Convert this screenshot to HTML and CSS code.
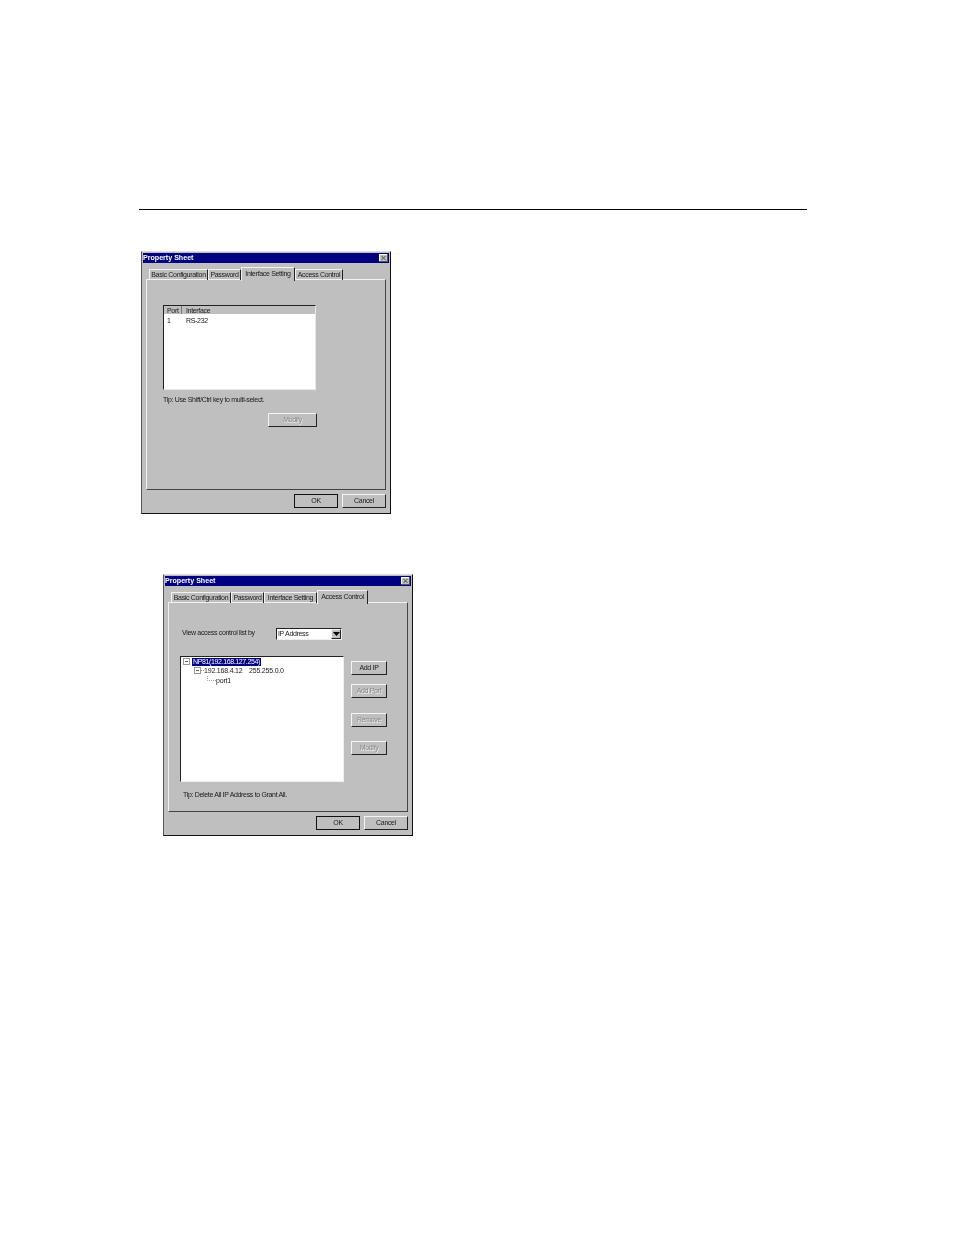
FILE: index.html
```html
<!DOCTYPE html>
<html lang="en">
<head>
<meta charset="utf-8">
<title>Property Sheet</title>
<link rel="stylesheet" href="styles.css">
</head>
<body>
<div class="rule"></div>

<section class="dialog first">
  <header class="title"><span>Property Sheet</span>
    <span class="close"><svg width="7" height="6" viewBox="0 0 7 6"><path d="M1.5 1L5.5 5M5.5 1L1.5 5" stroke="#333" stroke-width=".8" fill="none"/></svg></span>
  </header>
  <nav class="tabs">
    <span class="tab w-58">Basic Configuration</span>
    <span class="tab w-34">Password</span>
    <span class="tab active w-54">Interface Setting</span>
    <span class="tab w-47">Access Control</span>
  </nav>
  <div class="panel panel-one">
    <div class="list">
      <div class="list-head"><span class="col-port">Port</span><span class="col-iface">Interface</span></div>
      <div class="list-row"><span class="cell-port">1</span><span>RS-232</span></div>
    </div>
    <p class="tip tip-one">Tip: Use Shift/Ctrl key to multi-select.</p>
    <button class="btn btn-modify" disabled>Modify</button>
  </div>
  <footer class="foot"><button class="btn def">OK</button><button class="btn">Cancel</button></footer>
</section>

<section class="dialog second">
  <header class="title"><span>Property Sheet</span>
    <span class="close"><svg width="7" height="6" viewBox="0 0 7 6"><path d="M1.5 1L5.5 5M5.5 1L1.5 5" stroke="#333" stroke-width=".8" fill="none"/></svg></span>
  </header>
  <nav class="tabs">
    <span class="tab w-59">Basic Configuration</span>
    <span class="tab w-33">Password</span>
    <span class="tab w-53">Interface Setting</span>
    <span class="tab active w-50">Access Control</span>
  </nav>
  <div class="panel panel-two">
    <div class="view-row">
      <span class="view-label">View access control list by</span>
      <div class="combo"><span class="combo-text">IP Address</span>
        <span class="combo-btn"><svg width="7" height="4" viewBox="0 0 7 4"><path d="M0 0H7L3.5 4Z" fill="#000"/></svg></span>
      </div>
    </div>
    <div class="tree-row">
      <div class="tree">
        <div class="node">
          <svg class="exp" width="7" height="7" viewBox="0 0 7 7"><rect x=".5" y=".5" width="6" height="6" fill="#fff" stroke="#999"/><path d="M2 3.5H5" stroke="#555"/></svg>
          <span class="sel">NP81(192.168.127.254)</span>
        </div>
        <div class="node node-ip">
          <svg class="exp" width="10" height="7" viewBox="0 0 10 7"><rect x=".5" y=".5" width="6" height="6" fill="#fff" stroke="#999"/><path d="M2 3.5H5" stroke="#555"/><path d="M7 3.5H10" stroke="#999" stroke-dasharray="1 1"/></svg>
          <span class="ip">192.168.4.12</span><span>255.255.0.0</span>
        </div>
        <div class="node node-port">
          <svg width="9" height="8" viewBox="0 0 9 8"><path d="M.5 0V4.5H9" stroke="#999" stroke-dasharray="1 1" fill="none"/></svg>
          <span>port1</span>
        </div>
      </div>
      <div class="side">
        <button class="btn side-btn">Add IP</button>
        <button class="btn side-btn gap-9" disabled>Add Port</button>
        <button class="btn side-btn gap-15" disabled>Remove</button>
        <button class="btn side-btn gap-14" disabled>Modify</button>
      </div>
    </div>
    <p class="tip tip-two">Tip: Delete All IP Address to Grant All.</p>
  </div>
  <footer class="foot"><button class="btn def">OK</button><button class="btn">Cancel</button></footer>
</section>
</body>
</html>
```
FILE: styles.css
```css
html, body { margin: 0; padding: 0; background: #fff; }
body { height: 1235px; overflow: hidden; font: 7px/9px "Liberation Sans", Arial, sans-serif; letter-spacing: -0.33px; color: #1a1a1a; }

.rule { margin: 209px 0 0 139px; width: 668px; height: 1px; background: #000; }

.dialog {
  box-sizing: border-box; width: 250px; height: 263px; padding: 1px;
  background: #bfbfbf; border: 1px solid #111;
  border-top-color: #dcdcdc; border-left-color: #555;
  filter: blur(0.35px);
}
.first { margin: 41px 0 0 141px; }
.second { margin: 60px 0 0 163px; height: 262px; }

.title {
  height: 10px; background: #000080; color: #fff; font-weight: 700; font-size: 7.1px; letter-spacing: 0; line-height: 10px;
  display: flex; justify-content: space-between; align-items: center;
}
.close {
  width: 9px; height: 8px; margin-right: 1px; background: #bfbfbf; display: flex; align-items: center; justify-content: center;
  box-shadow: inset -1px -1px 0 #555, inset 1px 1px 0 #fff;
}

.tabs { display: flex; height: 11px; margin: 5px 3px 0; padding-left: 3px; position: relative; }
.tab {
  box-sizing: border-box; height: 11px; margin-top: 1px; text-align: center; line-height: 10px; white-space: nowrap;
  border-top: 1px solid #f2f2f2; border-left: 1px solid #f2f2f2; border-right: 1px solid #222;
}
.tab.active { height: 14px; margin-top: -1px; margin-bottom: -2px; line-height: 12px; background: #bfbfbf; position: relative; z-index: 1; }
.w-58 { width: 59px; } .w-34 { width: 33px; } .w-54 { width: 54px; } .w-47 { width: 48px; }
.w-59 { width: 60px; } .w-33 { width: 33px; } .w-53 { width: 53px; } .w-50 { width: 51px; }

.panel {
  box-sizing: border-box; width: 240px; height: 211px; margin: 0 3px;
  border: 1px solid #444; border-top-color: #f2f2f2; border-left-color: #f2f2f2;
}
.panel-one { padding: 25px 0 0 16px; }
.panel-two { padding: 25px 0 0 11px; height: 210px; }

.list {
  box-sizing: border-box; width: 153px; height: 85px; background: #fff;
  border: 1px solid #e8e8e8; border-top-color: #222; border-left-color: #222;
}
.list-head { display: flex; height: 8px; line-height: 9px; background: #bfbfbf; }
.col-port { box-sizing: border-box; width: 18px; padding-left: 3px; border-right: 1px solid #777; }
.col-iface { padding-left: 4px; }
.list-row { display: flex; padding: 2px 0 0 3px; }
.cell-port { width: 19px; }

.tip { margin: 0; white-space: nowrap; }
.tip-one { margin-top: 5px; }
.tip-two { margin: 8px 0 0 3px; }

.btn {
  box-sizing: border-box; display: block; width: 44px; height: 14px; padding: 0 0 1px; margin: 0;
  font: 7px/9px "Liberation Sans", Arial, sans-serif; letter-spacing: -0.33px; color: #1a1a1a; background: #bfbfbf;
  border: 1px solid #222; border-top-color: #f4f4f4; border-left-color: #f4f4f4;
}
.btn:disabled { color: #888; text-shadow: 0.6px 0.6px 0 #f4f4f4; }
.btn.def { border-color: #111; }
.btn-modify { width: 49px; margin: 9px 0 0 105px; }

.foot { display: flex; justify-content: flex-end; gap: 4px; margin: 4px 3px 0; }

.view-row { display: flex; align-items: center; height: 12px; }
.view-label { width: 94px; margin-left: 2px; margin-top: -4px; white-space: nowrap; }
.combo {
  box-sizing: border-box; width: 66px; height: 12px; background: #fff; display: flex; justify-content: space-between;
  border: 1px solid #eee; border-top-color: #222; border-left-color: #222;
}
.combo-text { padding-left: 1px; line-height: 10px; }
.combo-btn {
  box-sizing: border-box; width: 10px; height: 10px; background: #bfbfbf; display: flex; align-items: center; justify-content: center;
  border: 1px solid #222; border-top-color: #f4f4f4; border-left-color: #f4f4f4;
}

.tree-row { display: flex; gap: 7px; margin-top: 16px; }
.tree {
  box-sizing: border-box; width: 164px; height: 126px; background: #fff; letter-spacing: -0.2px;
  border: 1px solid #eee; border-top-color: #222; border-left-color: #222;
}
.node { display: flex; align-items: center; height: 9px; white-space: nowrap; padding-left: 2px; }
.node .exp { margin-right: 3px; flex: none; }
.sel { background: #000080; color: #fff; padding: 0 1px; line-height: 8px; margin-left: -1px; letter-spacing: -0.37px; }
.node-ip { padding-left: 13px; }
.node-ip .exp { margin-right: 0; }
.ip { width: 45px; margin-left: 0; }
.node-port { padding-left: 26px; height: 10px; }

.side { display: flex; flex-direction: column; padding-top: 5px; }
.side-btn { width: 36px; }
.gap-9 { margin-top: 9px; }
.gap-15 { margin-top: 15px; }
.gap-14 { margin-top: 14px; }
```
